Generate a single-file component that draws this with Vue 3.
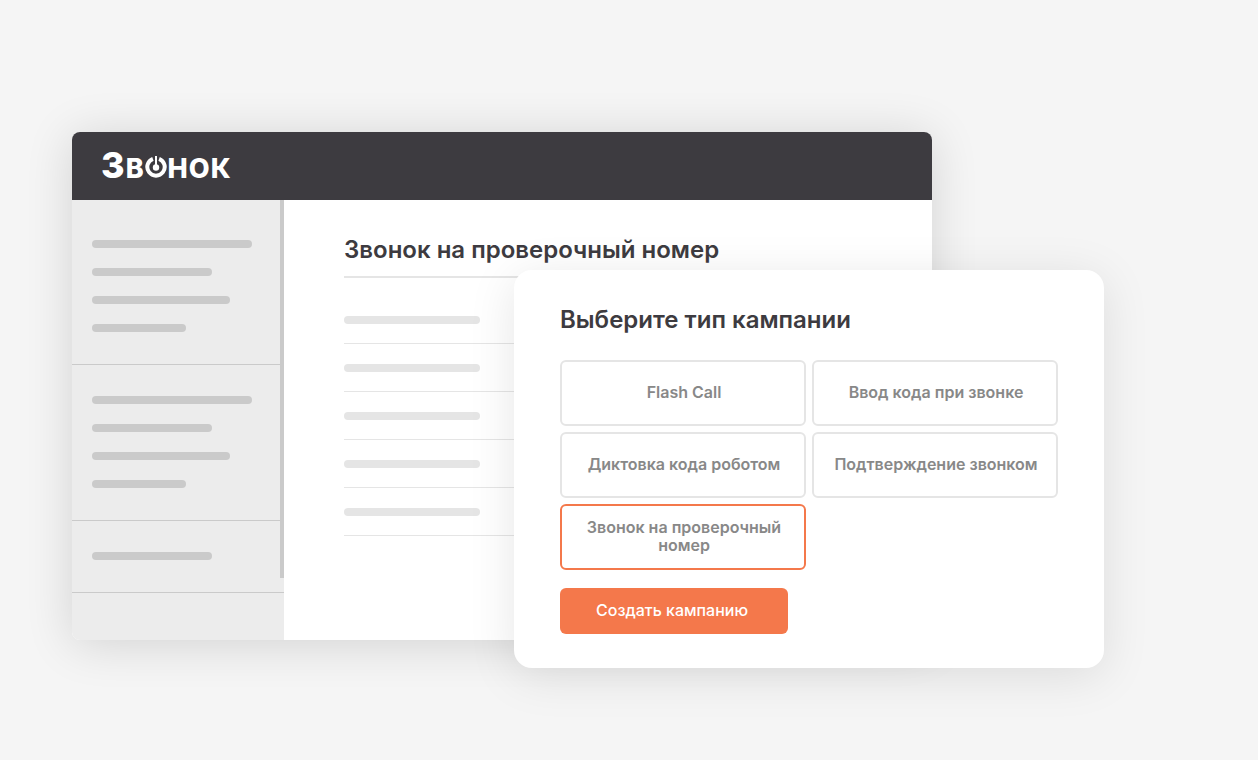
<script setup>
import { ref } from 'vue'

const navGroups = [
  ['full', 'short', 'medium', 'tiny'],
  ['full', 'short', 'medium', 'tiny'],
  ['short'],
]

const campaignTypes = [
  { id: 'flash', label: 'Flash Call' },
  { id: 'code', label: 'Ввод кода при звонке' },
  { id: 'robot', label: 'Диктовка кода роботом' },
  { id: 'confirm', label: 'Подтверждение звонком' },
  { id: 'number', label: 'Звонок на проверочный номер' },
]

const selected = ref('number')
</script>

<template>
  <div class="stage">
    <section class="window">
      <header class="topbar">
        <div class="logo">
          <span class="logo-initial">З</span>
          <span class="logo-text">В</span>
          <svg class="logo-mark" viewBox="0 0 22 22" aria-hidden="true">
            <path d="M7.9 2.8A8.7 8.7 0 1 0 14.1 2.8" fill="none" stroke="#fff" stroke-width="4" />
            <path d="M11 0V12" stroke="#fff" stroke-width="2" />
            <circle cx="11" cy="11.5" r="3.2" fill="#fff" />
          </svg>
          <span class="logo-text">Н</span>
          <span class="logo-text">О</span>
          <span class="logo-text">К</span>
        </div>
      </header>
      <div class="body">
        <nav class="sidebar">
          <div v-for="(group, g) in navGroups" :key="g" class="nav-group">
            <span v-for="(size, i) in group" :key="i" class="bar" :class="size"></span>
          </div>
          <span class="scroll-thumb"></span>
        </nav>
        <main class="content">
          <h1>Звонок на проверочный номер</h1>
          <div class="rows">
            <div v-for="n in 5" :key="n" class="row"><span class="row-bar"></span></div>
          </div>
        </main>
      </div>
    </section>

    <form class="dialog" @submit.prevent>
      <h2 id="dialog-title">Выберите тип кампании</h2>
      <div class="options" role="radiogroup" aria-labelledby="dialog-title">
        <label v-for="t in campaignTypes" :key="t.id" class="option" :class="{ active: selected === t.id }">
          <input v-model="selected" type="radio" name="campaign" :value="t.id" />
          <span>{{ t.label }}</span>
        </label>
      </div>
      <button type="submit" class="submit">Создать кампанию</button>
    </form>
  </div>
</template>

<style>
body {
  margin: 0;
  background: #f5f5f5;
}
</style>

<style scoped>
.stage {
  display: grid;
  grid-template-columns: 72fr 442fr 418fr 172fr 154fr;
  align-items: start;
  min-height: 100vh;
  box-sizing: border-box;
  padding: 132px 0 92px;
  background: #f5f5f5;
  color: #3d3b40;
  font-family: Inter, "Liberation Sans", sans-serif;
}

.window {
  grid-column: 2 / 4;
  grid-row: 1;
  min-width: 0;
  border-radius: 8px;
  background: #fff;
  box-shadow: 0 4px 48px rgba(0, 0, 0, 0.14);
}

.topbar {
  display: flex;
  align-items: center;
  box-sizing: border-box;
  height: 68px;
  padding: 2px 29px 0;
  border-radius: 8px 8px 0 0;
  background: #3d3b40;
}

.logo {
  display: flex;
  align-items: baseline;
  gap: 1px;
  color: #fff;
  font-weight: 800;
  line-height: 40px;
}

.logo-initial {
  font-size: 36px;
}

.logo-text {
  font-size: 27px;
}

.logo-mark {
  width: 22px;
  height: 22px;
  margin-bottom: -1px;
}

.body {
  display: flex;
}

.sidebar {
  position: relative;
  flex: 0 0 212px;
  box-sizing: border-box;
  padding: 9px 0 47px;
  border-radius: 0 0 0 8px;
  background: #ececec;
}

.nav-group {
  display: flex;
  flex-direction: column;
  gap: 20px;
  padding: 31px 32px 32px 20px;
  border-bottom: 1px solid #cacaca;
}

.bar {
  height: 8px;
  border-radius: 4px;
  background: #cacaca;
}

.full {
  width: 160px;
}

.medium {
  width: 138px;
}

.short {
  width: 120px;
}

.tiny {
  width: 94px;
}

.scroll-thumb {
  position: absolute;
  top: 0;
  right: 0;
  bottom: 62px;
  width: 4px;
  background: #cacaca;
}

.content {
  flex: 1;
  min-width: 0;
  padding: 35px 60px 0;
}

h1,
h2 {
  margin: 0;
  font-size: 24px;
  font-weight: 600;
  line-height: 30px;
}

h1 {
  padding-bottom: 11px;
  border-bottom: 2px solid #e5e5e5;
}

.rows {
  margin-top: 18px;
}

.row {
  padding: 20px 0 19px;
  border-bottom: 1px solid #e5e5e5;
}

.row-bar {
  display: block;
  width: 136px;
  height: 8px;
  border-radius: 4px;
  background: #e5e5e5;
}

.dialog {
  grid-column: 3 / 5;
  grid-row: 1;
  z-index: 1;
  min-width: 0;
  margin-top: 138px;
  padding: 35px 46px 34px;
  border-radius: 18px;
  background: #fff;
  box-shadow: 0 8px 48px rgba(0, 0, 0, 0.1);
}

.options {
  display: grid;
  grid-template-columns: 1fr 1fr;
  gap: 6px;
  margin-top: 25px;
}

.option {
  position: relative;
  display: flex;
  align-items: center;
  justify-content: center;
  box-sizing: border-box;
  min-height: 66px;
  padding: 0 18px 3px 20px;
  border: 2px solid #e5e5e5;
  border-radius: 6px;
  color: #888;
  font-size: 16px;
  font-weight: 600;
  line-height: 18px;
  text-align: center;
  cursor: pointer;
}

.option.active {
  border-color: #f4784b;
}

.option input {
  position: absolute;
  inset: 0;
  margin: 0;
  opacity: 0;
  cursor: pointer;
}

.submit {
  display: block;
  height: 46px;
  margin-top: 18px;
  padding: 0 40px 2px 36px;
  border: 0;
  border-radius: 6px;
  background: #f4784b;
  color: #fff;
  font-family: inherit;
  font-size: 16px;
  font-weight: 500;
  cursor: pointer;
}
</style>
